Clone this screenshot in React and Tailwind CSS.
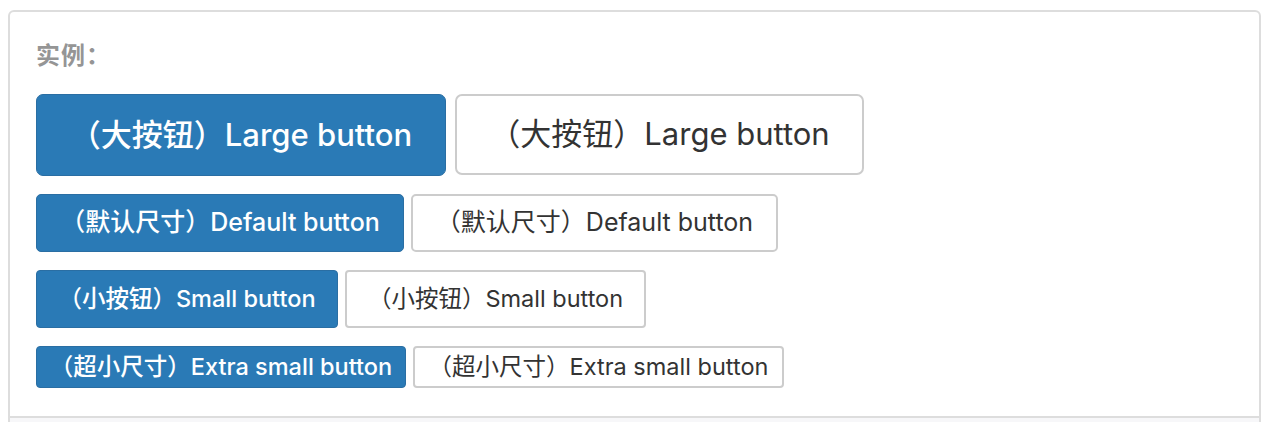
export default function App() {
  const font = { fontFamily: '"Inter", "Noto Sans CJK SC", sans-serif' };
  const primary =
    "flex items-center justify-center bg-[#2a7ab6] border border-[#2a6ea3] text-white font-medium whitespace-nowrap";
  const plain =
    "flex items-center justify-center bg-white border-2 border-[#cccccc] text-[#333333] whitespace-nowrap";
  return (
    <div className="bg-white w-[1266px] h-[422px] overflow-hidden pt-[10px] pl-[8px]" style={font}>
      <div className="w-[1253px]">
        <div className="border-2 border-[#dddddd] rounded-t-[6px] pl-[26px] pt-[30px] pb-[28px]">
          <div className="text-[24px] font-bold text-[#959595] leading-[28px] tracking-[1px]">实例：</div>
          <div className="flex flex-col gap-[18px] mt-[24px]">
            <div className="flex gap-[9px]">
              <button className={primary + " w-[410px] h-[82px] rounded-[7px] text-[31px]"}>（大按钮）Large button</button>
              <button className={plain + " w-[409px] h-[81px] rounded-[7px] text-[31px]"}>（大按钮）Large button</button>
            </div>
            <div className="flex gap-[7px]">
              <button className={primary + " w-[368px] h-[58px] rounded-[5px] text-[25px]"}>（默认尺寸）Default button</button>
              <button className={plain + " w-[367px] h-[58px] rounded-[5px] text-[25px]"}>（默认尺寸）Default button</button>
            </div>
            <div className="flex gap-[7px]">
              <button className={primary + " w-[302px] h-[58px] rounded-[4px] text-[23.5px]"}>（小按钮）Small button</button>
              <button className={plain + " w-[301px] h-[58px] rounded-[4px] text-[23.5px]"}>（小按钮）Small button</button>
            </div>
            <div className="flex gap-[7px]">
              <button className={primary + " w-[370px] h-[42px] rounded-[4px] text-[23.5px]"}>（超小尺寸）Extra small button</button>
              <button className={plain + " w-[371px] h-[42px] rounded-[4px] text-[23.5px]"}>（超小尺寸）Extra small button</button>
            </div>
          </div>
        </div>
        <div className="h-[20px] bg-[#f7f7f9] border-x-2 border-[#dddddd]"></div>
      </div>
    </div>
  );
}
